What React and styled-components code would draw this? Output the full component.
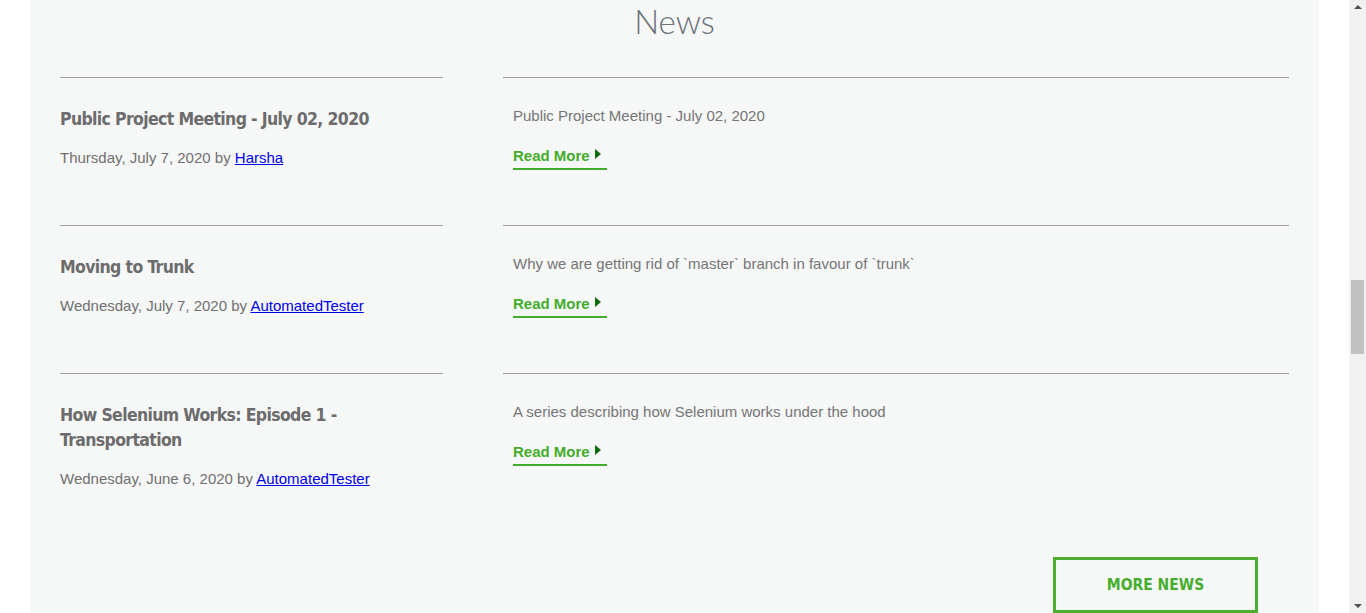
import React from "react";
import styled, { createGlobalStyle } from "styled-components";

const GlobalStyle = createGlobalStyle`
  body {
    margin: 0;
    background: #ffffff;
    font-family: "Liberation Sans", Arial, sans-serif;
  }
`;

const Page = styled.main`
  margin-right: 17px;
`;

const Panel = styled.section`
  margin: 0 30px;
  padding: 0 30px 40px;
  background-color: #f6f7f7;
`;

const Heading = styled.h2`
  margin: 0 0 35px;
  font-family: Lato, "Open Sans", sans-serif;
  font-weight: 300;
  font-size: 33px;
  line-height: 42px;
  text-align: center;
  color: #6b7079;
`;

const Row = styled.div`
  display: grid;
  grid-template-columns: 383px 1fr;
  column-gap: 60px;
`;

const Cell = styled.div`
  border-top: 1px solid #a3a3a3;
  padding: 28px 0 ${(p) => (p.$indent ? "40px" : "57px")};
  padding-left: ${(p) => (p.$indent ? "10px" : "0")};
`;

const Title = styled.h3`
  margin: 0 0 17px;
  font-family: "DejaVu Sans Condensed", sans-serif;
  font-weight: bold;
  font-size: 17.5px;
  letter-spacing: -0.65px;
  line-height: 25px;
  color: #6c6c6c;
  padding-top: 1px;
  margin-bottom: 16px;
`;

const Meta = styled.p`
  margin: 0;
  font-size: 15px;
  line-height: 20px;
  color: #707070;
  a {
    color: #0000ee;
  }
`;

const Summary = styled.p`
  margin: 0 0 20px;
  font-size: 15px;
  line-height: 20px;
  color: #757575;
`;

const ReadMore = styled.a`
  display: inline-block;
  vertical-align: top;
  padding: 0 6px 2px 0;
  border-bottom: 2px solid #43ad2b;
  font-size: 15px;
  font-weight: bold;
  line-height: 20px;
  color: #43ad2b;
  text-decoration: none;
  &::after {
    content: "";
    display: inline-block;
    vertical-align: top;
    margin: 3px 0 0 5px;
    border-style: solid;
    border-width: 5px 0 5px 6px;
    border-color: transparent transparent transparent #0b6b0b;
  }
`;

const Footer = styled.div`
  display: flex;
  justify-content: flex-end;
  padding: 11px 31px 0 0;
`;

const MoreButton = styled.a`
  display: flex;
  align-items: center;
  justify-content: center;
  width: 199px;
  height: 50px;
  border: 3px solid #4caf2f;
  font-family: "DejaVu Sans Condensed", sans-serif;
  font-weight: bold;
  font-size: 15.5px;
  color: #45ad2b;
  text-decoration: none;
`;

const Scrollbar = styled.div`
  position: fixed;
  top: 0;
  right: 0;
  bottom: 0;
  width: 17px;
  background: #f1f1f1;
  display: flex;
  flex-direction: column;
  align-items: center;
  justify-content: space-between;
  padding: 5px 0;
  box-sizing: border-box;
`;

const Arrow = styled.span`
  width: 0;
  height: 0;
  border-left: 4px solid transparent;
  border-right: 4px solid transparent;
  border-${(p) => (p.$down ? "top" : "bottom")}: 4px solid #505050;
`;

const Thumb = styled.span`
  position: absolute;
  top: 280px;
  left: 2px;
  width: 13px;
  height: 74px;
  background: #c1c1c1;
`;

const news = [
  {
    title: "Public Project Meeting - July 02, 2020",
    date: "Thursday, July 7, 2020",
    author: "Harsha",
    summary: "Public Project Meeting - July 02, 2020",
  },
  {
    title: "Moving to Trunk",
    date: "Wednesday, July 7, 2020",
    author: "AutomatedTester",
    summary: "Why we are getting rid of `master` branch in favour of `trunk`",
  },
  {
    title: "How Selenium Works: Episode 1 - Transportation",
    date: "Wednesday, June 6, 2020",
    author: "AutomatedTester",
    summary: "A series describing how Selenium works under the hood",
  },
];

export default function App() {
  return (
    <>
      <GlobalStyle />
      <Page>
        <Panel>
          <Heading>News</Heading>
          {news.map((item) => (
            <Row key={item.title}>
              <Cell>
                <Title>{item.title}</Title>
                <Meta>
                  {item.date} by <a href="#">{item.author}</a>
                </Meta>
              </Cell>
              <Cell $indent>
                <Summary>{item.summary}</Summary>
                <ReadMore href="#">Read More</ReadMore>
              </Cell>
            </Row>
          ))}
          <Footer>
            <MoreButton href="#">MORE NEWS</MoreButton>
          </Footer>
        </Panel>
      </Page>
      <Scrollbar>
        <Arrow />
        <Thumb />
        <Arrow $down />
      </Scrollbar>
    </>
  );
}
